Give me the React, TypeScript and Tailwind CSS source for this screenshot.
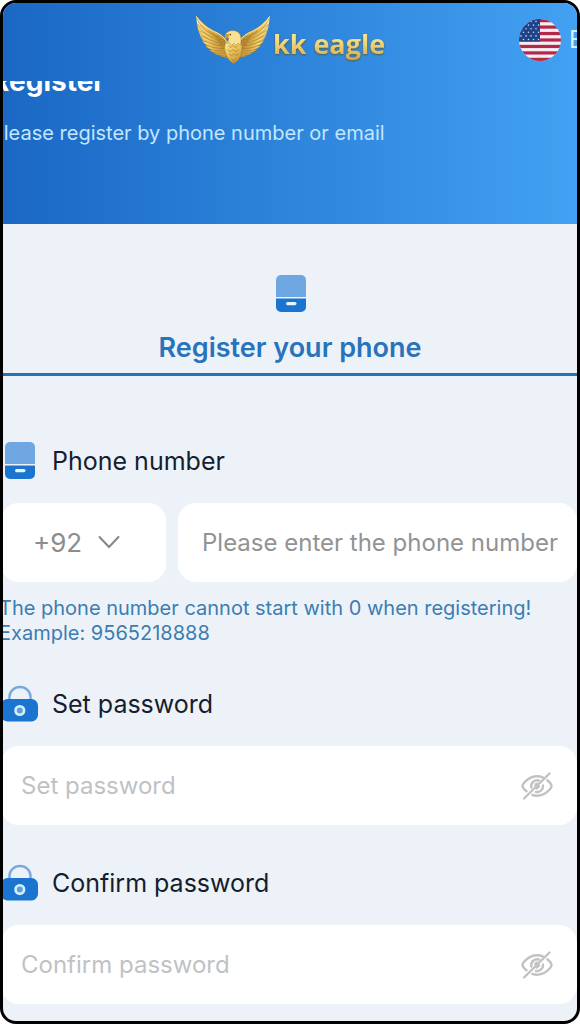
import React, { useState } from "react"
import clsx from "clsx"

// start, control and tip of each feather of the left wing, lowest first
const FEATHERS = [
  "M122 136 Q112 152 92 142 Q106 138 116 126Z",
  "M120 132 Q98 150 74 134 Q96 134 114 120Z",
  "M118 128 Q86 145 60 124 Q88 126 112 114Z",
  "M116 124 Q74 137 48 112 Q80 118 110 110Z",
  "M114 120 Q64 126 38 98 Q72 108 108 106Z",
  "M112 114 Q56 113 31 82 Q66 98 107 102Z",
  "M110 108 Q50 100 26 65 Q62 86 106 98Z",
  "M108 102 Q46 86 22 46 Q60 72 105 94Z",
  "M108 98 Q36 72 21 23 Q56 62 80 70 Q98 78 108 98Z",
]

const Wing = () => (
  <g fill="url(#gold)" stroke="#94691f" strokeWidth="1.3" strokeLinejoin="round">
    <path
      d="M22 24 C23 54 31 82 46 104 C64 126 88 142 116 150 L126 120 L112 94 C100 80 90 74 76 68 C54 58 36 46 22 24Z"
      stroke="none"
    />
    {FEATHERS.map((d) => (
      <path key={d} d={d} />
    ))}
    <path
      d="M72 76q8 9 20 9M80 86q8 8 20 8M84 96q8 7 20 6M90 107q8 5 18 2M96 118q6 4 14 0M58 66q6 8 16 11"
      fill="none"
      strokeWidth="1.6"
    />
    <path d="M22 24 C38 50 56 60 76 70 C92 77 102 84 112 98" fill="none" stroke="#fbe797" strokeWidth="3" />
  </g>
)

const EagleMark = () => (
  <svg viewBox="18 20 228 150" className="h-[50px] w-[76px] shrink-0" aria-hidden="true">
    <defs>
      <linearGradient id="gold" x1="0" y1="0" x2="0.6" y2="1">
        <stop offset="0" stopColor="#fdf3b4" />
        <stop offset="0.5" stopColor="#eec75e" />
        <stop offset="1" stopColor="#c5953a" />
      </linearGradient>
    </defs>
    <Wing />
    <g transform="translate(264 0) scale(-1 1)">
      <Wing />
    </g>
    <path
      d="M111 98 Q102 118 111 138 L119 154 L134 167 L149 154 L157 138 Q164 116 153 96Z"
      fill="url(#gold)"
      stroke="#94691f"
      strokeWidth="1.4"
    />
    <path
      d="M118 112l7 6 7-6 7 6 7-6M116 124l8 6 8-6 8 6 8-6M120 136l7 6 7-6 7 6 7-6M126 150l8 8 8-8M134 156v9"
      fill="none"
      stroke="#9c7226"
      strokeWidth="1.8"
    />
    <path
      d="M110 88 Q106 79 113 73 Q122 65 136 67 Q154 70 156 88 Q158 101 153 110 L147 104 L141 112 L134 105 L127 112 L121 103 L112 105 Q120 98 119 89 L112 87Z"
      fill="#fae193"
      stroke="#95702a"
      strokeWidth="1.4"
    />
    <path d="M119 76 Q108 75 107 84 L109 94 Q112 87 120 87Z" fill="#d99a20" />
    <circle cx="124" cy="79" r="2.4" fill="#5c3d0c" />
  </svg>
)

const UsFlag = () => (
  <svg viewBox="0 0 42 42" className="size-[42px] shrink-0" aria-hidden="true">
    <clipPath id="flag">
      <circle cx="21" cy="21" r="21" />
    </clipPath>
    <g clipPath="url(#flag)">
      <rect width="42" height="42" fill="#f6eef3" />
      {[0, 2, 4, 6, 8, 10, 12].map((n) => (
        <rect key={n} y={(n * 42) / 13} width="42" height={42 / 13} fill="#b3294a" />
      ))}
      <rect width="21" height="22.6" fill="#1f4389" />
      {[0, 1, 2, 3, 4, 5].map((row) =>
        [0, 1, 2, 3].map((col) => (
          <circle key={`${row}-${col}`} cx={2 + col * 5 + (row % 2) * 2.5} cy={2.5 + row * 3.6} r="0.8" fill="#c6d4ec" />
        )),
      )}
    </g>
  </svg>
)

const PhoneIcon = () => (
  <svg viewBox="0 0 37 37" className="size-[37px] shrink-0" aria-hidden="true">
    <path d="M4 22V5a5 5 0 0 1 5-5h20a5 5 0 0 1 5 5v17z" fill="#6fa7e2" />
    <path d="M4 23.5h30V32a5 5 0 0 1-5 5H9a5 5 0 0 1-5-5z" fill="#1b74cf" />
    <rect x="14" y="27" width="10.5" height="3.2" rx="1.6" fill="#e6f6ff" />
  </svg>
)

const LockIcon = () => (
  <svg viewBox="0 0 37 37" className="size-[37px] shrink-0" aria-hidden="true">
    <path d="M8.5 15v-3.5a10.5 9.5 0 0 1 21 0V15" fill="none" stroke="#78a8de" strokeWidth="2.4" />
    <rect y="14" width="37" height="22.5" rx="6.5" fill="#1b74cf" />
    <circle cx="18.8" cy="25.5" r="4.3" fill="#5da0d8" stroke="#d3f1fc" strokeWidth="2.6" />
  </svg>
)

const EyeOffIcon = () => (
  <svg
    viewBox="0 0 32 28"
    className="h-7 w-8"
    fill="none"
    stroke="#c2c2c4"
    strokeWidth="2.4"
    strokeLinecap="round"
    aria-hidden="true"
  >
    <path d="M5.5 19.2C3 17.2 1.5 15 1.5 14 1.5 12 7.500 4.300 16 4.300c2.300 0 4.400.5 6.200 1.300" />
    <path d="M26.300 8.200c2.700 2.200 4.200 4.700 4.200 5.800 0 2-6 9.700-14.500 9.700-1.700 0-3.300-.3-4.700-.8" />
    <path d="M10.300 15.500A6 6 0 0 1 18.200 8.600" />
    <path d="M22 13.500a6 6 0 0 1-7 6.500" />
    <path d="M14.300 13.500a2.200 2.200 0 0 1 2-1.800M18 14.300l-2.500 2.200" />
    <path d="M28.500 1.500 3 26.500" />
  </svg>
)

interface FieldProps {
  id: string
  label: string
  icon: React.ReactNode
  children: React.ReactNode
}

const Field: React.FC<FieldProps> = ({ id, label, icon, children }) => (
  <div>
    <label htmlFor={id} className="mb-6 flex h-[37px] items-center gap-3.5 text-[25px] leading-8 text-[#161d2e]">
      {icon}
      {label}
    </label>
    {children}
  </div>
)

const PasswordField = ({ id, label }: { id: string; label: string }) => {
  const [visible, setVisible] = useState(false)

  return (
    <Field id={id} label={label} icon={<LockIcon />}>
      <div className="flex h-[79px] items-center rounded-[18px] bg-white pr-6 pl-5">
        <input
          id={id}
          type={visible ? "text" : "password"}
          placeholder={label}
          className="min-w-0 flex-1 text-2xl text-[#161d2e] outline-none placeholder:text-[#bfc2c5]"
        />
        <button
          type="button"
          aria-label="Toggle password visibility"
          className={clsx("cursor-pointer", visible && "opacity-60")}
          onClick={() => setVisible(!visible)}
        >
          <EyeOffIcon />
        </button>
      </div>
    </Field>
  )
}

export default function App() {
  return (
    <div className="min-h-screen overflow-hidden rounded-2xl border-[3px] border-black bg-[#edf2f9] font-['Inter',sans-serif]">
      <header className="bg-linear-to-r from-[#1a68c4] to-[#42a1f2] pb-[79px]">
        <div className="grid h-[78px] grid-cols-[1fr_auto_1fr] items-center pb-1">
          <a href="#" className="col-start-2 flex items-center gap-0.5">
            <EagleMark />
            <span className="bg-linear-to-b from-[#fff6bd] via-[#f5dc84] to-[#cf9f3a] bg-clip-text pt-2 font-['Open_Sans',sans-serif] text-[27px] leading-10 font-bold text-transparent drop-shadow-[0_1px_1px_#5a5a30]">
              kk eagle
            </span>
          </a>
          <button
            type="button"
            className="flex w-[58px] items-center gap-2 justify-self-end overflow-hidden text-2xl text-[#d5f0ff]"
          >
            <UsFlag />
            English
          </button>
        </div>
        <div className="-ml-3 overflow-hidden">
          <h1 className="-mt-[18px] text-[28px] leading-9 font-bold text-white">Register</h1>
          <p className="mt-[22px] text-xl leading-6 whitespace-nowrap text-[#c3e6fd]">
            Please register by phone number or email
          </p>
        </div>
      </header>

      <main>
        <button
          type="button"
          className="flex w-full flex-col items-center border-b-[3px] border-[#1f75bd] pt-[51px] pb-[7px] text-[27px] font-semibold text-[#2873b9]"
        >
          <PhoneIcon />
          <span className="mt-[18px] leading-9">Register your phone</span>
        </button>

        <form className="-ml-0.5 flex flex-col gap-[39px] pt-[66px] pb-4">
          <Field id="phone" label="Phone number" icon={<PhoneIcon />}>
            <div className="flex gap-3">
              <div className="relative w-[165px] shrink-0">
                <select
                  aria-label="Country code"
                  className="h-[79px] w-full appearance-none rounded-[18px] bg-white pl-8 text-[26px] text-[#8c8c8c] outline-none"
                >
                  <option>+92</option>
                </select>
                <svg
                  viewBox="0 0 22 14"
                  className="pointer-events-none absolute top-8 right-[46px] h-3.5 w-[22px]"
                  fill="none"
                  stroke="#858585"
                  strokeWidth="2"
                  strokeLinecap="round"
                  aria-hidden="true"
                >
                  <path d="m1.5 2 9.5 10 9.5-10" />
                </svg>
              </div>
              <div className="flex min-w-0 flex-1 rounded-[18px] bg-white pr-[19px] pl-6">
                <input
                  id="phone"
                  type="tel"
                  placeholder="Please enter the phone number"
                  className="h-[79px] w-full text-2xl text-[#161d2e] outline-none placeholder:text-[#919394]"
                />
              </div>
            </div>
            <p className="mt-3.5 -ml-0.5 text-xl leading-[25px] text-[#3b7db2]">
              The phone number cannot start with 0 when registering!
              <br />
              Example: 9565218888
            </p>
          </Field>
          <PasswordField id="password" label="Set password" />
          <PasswordField id="confirm" label="Confirm password" />
        </form>
      </main>
    </div>
  )
}
